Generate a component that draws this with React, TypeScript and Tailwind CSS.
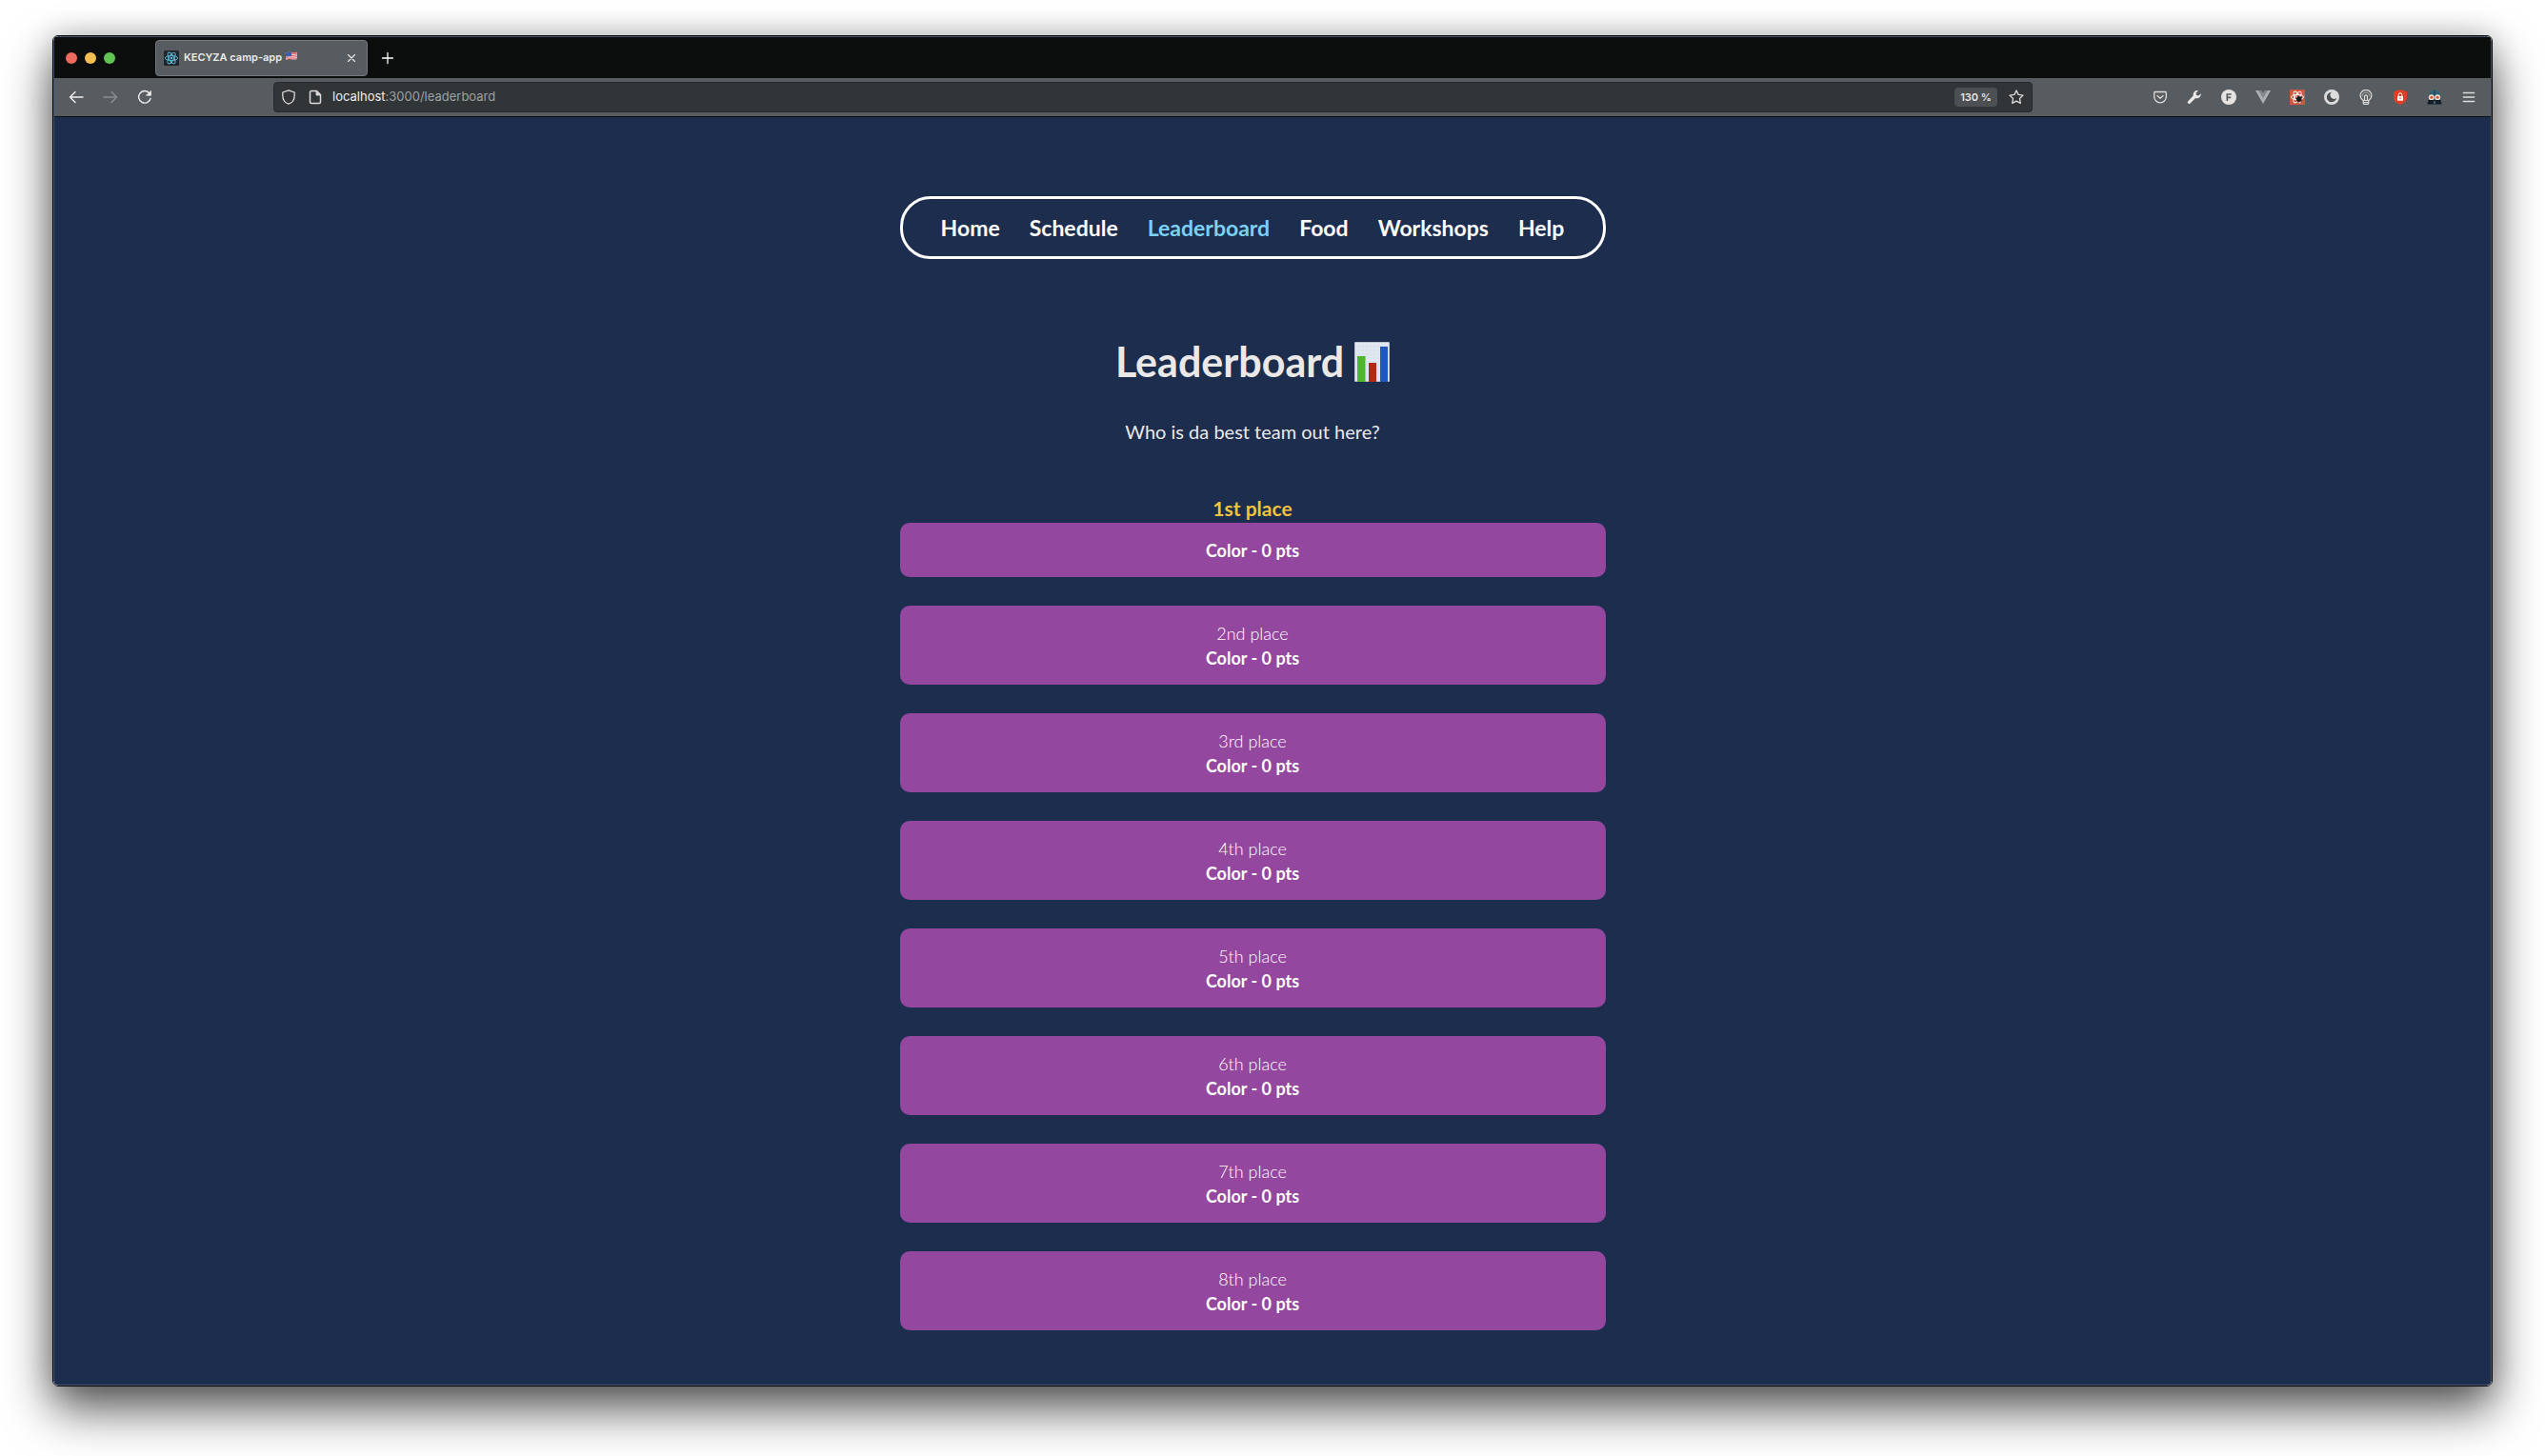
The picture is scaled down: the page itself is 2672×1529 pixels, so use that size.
import React from "react";

const links = ["Home", "Schedule", "Leaderboard", "Food", "Workshops", "Help"];
const places = ["2nd", "3rd", "4th", "5th", "6th", "7th", "8th"];

function Stroke({ children, className = "size-4", width = 1.3 }: { children: React.ReactNode; className?: string; width?: number }) {
  return (
    <svg viewBox="0 0 16 16" className={className} fill="none" stroke="currentColor" strokeWidth={width} strokeLinecap="round" strokeLinejoin="round" aria-hidden="true">
      {children}
    </svg>
  );
}

function Art({ children }: { children: React.ReactNode }) {
  return <svg viewBox="0 0 16 16" className="size-4" aria-hidden="true">{children}</svg>;
}

function ReactMark({ color }: { color: string }) {
  return (
    <g fill="none" stroke={color} strokeWidth="0.9">
      <ellipse cx="8" cy="8" rx="6.6" ry="2.6" />
      <ellipse cx="8" cy="8" rx="6.6" ry="2.6" transform="rotate(60 8 8)" />
      <ellipse cx="8" cy="8" rx="6.6" ry="2.6" transform="rotate(120 8 8)" />
      <circle cx="8" cy="8" r="1.2" fill={color} stroke="none" />
    </g>
  );
}

function Flag() {
  return (
    <svg viewBox="0 0 12 10" className="h-[10px] w-3" aria-hidden="true">
      <path d="M0 1.5Q3 .2 6 1T12 .8V8Q9 9 6 8.300T0 9Z" fill="#f0e6e6" />
      <path d="M0 8.300Q3 7.200 6 7.800T12 7.300M0 6.500Q3 5.500 6 6T12 5.500M6 4.300Q9 4.800 12 3.900M6 2.600Q9 3 12 2.200M6 1.200Q9 1.700 12 1" stroke="#d8525c" strokeWidth=".9" fill="none" />
      <path d="M0 1.500Q3 .2 6 1V5Q3 4.600 0 5.600Z" fill="#3d5fa8" />
    </svg>
  );
}

function TabBar() {
  return (
    <div className="flex h-[43px] items-center bg-[#0c0e0d] pl-3">
      <div className="flex gap-2">
        <button aria-label="Close window" className="size-3 rounded-full bg-[#ee6a5f]" />
        <button aria-label="Minimize window" className="size-3 rounded-full bg-[#f5bf4f]" />
        <button aria-label="Zoom window" className="size-3 rounded-full bg-[#61c554]" />
      </div>
      <div className="ml-[42px] flex h-[38px] w-[223px] items-center rounded border border-[#75777f] bg-[#575c60] px-2 text-[#eceae8]">
        <svg viewBox="0 0 16 16" className="size-4" aria-hidden="true">
          <rect width="16" height="16" rx="1.500" fill="#20242b" />
          <ReactMark color="#5fc3e0" />
        </svg>
        <span className="ml-[5px] text-[11px] font-semibold whitespace-nowrap">KECYZA camp-app</span>
        <span className="mb-[3px] ml-1"><Flag /></span>
        <button aria-label="Close tab" className="ml-auto"><Stroke width={1.1}><path d="M4.500 4.500l7 7M11.500 4.500l-7 7" /></Stroke></button>
      </div>
      <button aria-label="New tab" className="ml-[13px] text-white"><Stroke><path d="M8 2.500v11M2.500 8h11" /></Stroke></button>
    </div>
  );
}

function Extensions() {
  return (
    <div className="flex w-[481px] shrink-0 items-center justify-end gap-5 pr-[15px] text-[#dddcda]">
      <button aria-label="Pocket"><Stroke><path d="M2.700 2.500h10.600a1 1 0 0 1 1 1v4a6.300 6.300 0 0 1-12.600 0v-4a1 1 0 0 1 1-1Z" /><path d="M5 6.500l3 2.800 3-2.800" /></Stroke></button>
      <button aria-label="Developer tools">
        <Art><path d="M14.800 4.200l-2.500 2.300-2.300-.5-.5-2.300L11.900 1.200A4.300 4.300 0 0 0 6.700 6.600L1.300 12.200a1.500 1.500 0 0 0 0 2.200 1.500 1.500 0 0 0 2.200 0L9.100 9A4.300 4.300 0 0 0 14.800 4.200Z" fill="#eceae8" /></Art>
      </button>
      <button aria-label="Fonts">
        <Art><circle cx="8" cy="8" r="8" fill="#e6e4e2" /><path d="M6.300 12V5h4.500M6.300 8.300h4" stroke="#575c60" strokeWidth="1.700" fill="none" /></Art>
      </button>
      <button aria-label="Vue devtools">
        <Art><path d="M0 1h6.200L8 4.200 9.800 1H16L8 15Z" fill="#aeb0b1" /><path d="M3.200 1h3L8 4.200 9.800 1h3L8 9.500Z" fill="#85888a" /></Art>
      </button>
      <button aria-label="React devtools">
        <Art><rect width="16" height="16" fill="#d0573f" /><ReactMark color="#fff" /><ellipse cx="9.500" cy="10" rx="2.500" ry="3" fill="#1b1918" /><path d="M6 9l7 3M6.500 12.500l6-5M9 6v8M12 7v6.500" stroke="#1b1918" strokeWidth=".8" /></Art>
      </button>
      <button aria-label="Dark mode">
        <Art><circle cx="8" cy="8" r="8" fill="#dddcda" /><path d="M8 2.800a5.200 5.200 0 1 0 5.200 6A3.600 3.600 0 1 1 8 2.800Z" fill="#4b5054" /></Art>
      </button>
      <button aria-label="Lighthouse">
        <Stroke width={1.2}><path d="M5.200 11.500A5.900 5.900 0 1 1 10.800 11.500V14.300a1 1 0 0 1-1 1H6.200a1 1 0 0 1-1-1Z" /><path d="M6.500 11.300V7.300a1.500 1.500 0 0 1 3 0v4M5.500 11.500h5M5.500 13.500h5" /><path d="M4 7a4 4 0 0 1 8 0" strokeWidth=".7" /></Stroke>
      </button>
      <button aria-label="Privacy shield">
        <Art><path d="M8 0L15 2.300V7.500C15 11.500 12.500 14.500 8 16 3.500 14.500 1 11.500 1 7.500V2.300Z" fill="#e03c26" /><rect x="5" y="7" width="6" height="4.800" rx=".5" fill="#fff" /><path d="M6.200 7V5.500a1.800 1.800 0 0 1 3.600 0V7" stroke="#fff" fill="none" /><path d="M8 8.500v1.500" stroke="#e03c26" /></Art>
      </button>
      <button aria-label="Incognito helper">
        <Art><path d="M2 8C2 3 4.500.5 8 .5S14 3 14 8l1.500 7.500H.5Z" fill="#2f6377" /><path d="M1.500 11h13l1 4.500H.5Z" fill="#171c24" /><path d="M8 .5v6" stroke="#1d3e4d" /><circle cx="4.800" cy="8.200" r="2.900" fill="#f2e3d6" /><circle cx="11.200" cy="8.200" r="2.900" fill="#f2e3d6" /><circle cx="4.800" cy="8.200" r="1.500" fill="#e0502f" /><circle cx="11.200" cy="8.200" r="1.500" fill="#e0502f" /><path d="M8 11.500l-1.500 3h3Z" fill="#46788c" /></Art>
      </button>
      <button aria-label="Menu"><Stroke><path d="M2.300 3.500h11.400M2.300 8h11.400M2.300 12.500h11.400" /></Stroke></button>
    </div>
  );
}

function Toolbar() {
  return (
    <div className="flex h-[41px] items-center border-b border-[#0c0e0d] bg-[#575c60]">
      <div className="flex w-[230px] shrink-0 gap-5 pl-[15px] text-[#f0eeec]">
        <button aria-label="Back"><Stroke width={1.4}><path d="M15 8H1.500M7 2.500L1.500 8 7 13.500" /></Stroke></button>
        <button aria-label="Forward" className="text-[#8b8f92]" disabled><Stroke width={1.4}><path d="M1 8h13.500M9 2.500L14.500 8 9 13.500" /></Stroke></button>
        <button aria-label="Reload"><Stroke width={1.4}><path d="M14 9.500A6.300 6.300 0 1 1 12.500 3.500" /><path d="M14.500 1.500V6.300H9.700Z" fill="currentColor" strokeWidth=".6" /></Stroke></button>
      </div>
      <div className="flex h-8 flex-1 items-center rounded border border-[#272a2c] bg-[#313537] pr-2 pl-[7px] text-[#dddcda]">
        <Stroke><path d="M8 .8L14.200 3V6C14.200 10.500 12 14 8 15.200 4 14 1.800 10.500 1.800 6V3Z" /></Stroke>
        <span className="ml-3"><Stroke width={1.500}><path d="M9.500 1.500H4A1.500 1.500 0 0 0 2.500 3v10A1.500 1.500 0 0 0 4 14.500h8a1.500 1.500 0 0 0 1.500-1.500V5.500Z" /><path d="M9 1.500v4.500h4.500Z" fill="currentColor" strokeWidth=".8" /></Stroke></span>
        <a href="#leaderboard" className="ml-[10px] flex-1 text-[13px] text-[#9fa1a2]"><span className="text-[#f0eeec]">localhost</span>:3000/leaderboard</a>
        <button className="h-5 w-[45px] rounded-sm bg-[#4c5053] text-[11px] font-semibold text-[#e6e4e2]">130 %</button>
        <button aria-label="Bookmark" className="ml-3"><Stroke><path d="M8 1l2.100 4.400 4.900.7-3.500 3.400.8 4.900L8 12.100 3.700 14.400l.8-4.900L1 6.100l4.900-.7Z" /></Stroke></button>
      </div>
      <Extensions />
    </div>
  );
}

function ChartIcon() {
  return (
    <svg viewBox="0 0 37 42" className="h-[42px] w-[37px]" aria-label="bar chart" role="img">
      <rect width="37" height="42" rx="1" fill="#b9c0cb" />
      <rect x="1" y="1" width="35" height="40" fill="#e2e9f3" />
      <path d="M1 5h35M1 9h35M1 13h35M1 17h35M1 21h35M1 25h35M1 29h35M1 33h35M1 37h35M5 1v40M9 1v40M13 1v40M17 1v40M21 1v40M25 1v40M29 1v40M33 1v40" stroke="#d3dbe7" strokeWidth=".6" />
      <rect x="3" y="15" width="8.500" height="27" fill="#50b432" />
      <rect x="15" y="22" width="8" height="20" fill="#b02a14" />
      <rect x="27" y="5" width="8" height="37" fill="#2158bd" />
    </svg>
  );
}

export default function App() {
  return (
    <div className="bg-white px-[55px] pt-[37px] pb-[73px] font-['Inter',sans-serif]">
      <div className="overflow-hidden rounded-md border border-black shadow-[0_24px_50px_rgba(0,0,0,0.65),0_0_30px_rgba(0,0,0,0.2)]">
        <div className="rounded-[5px] border border-white/20 bg-[#1d2d4d]">
          <TabBar />
          <Toolbar />
          <div className="pt-[83px] pr-[42px] pb-[57px] font-['Lato',sans-serif] text-[#ebe9e7]">
            <div className="mx-auto max-w-[741px] text-center">
              <nav className="flex h-[66px] items-center justify-center gap-[31px] rounded-[32px] border-[3px] border-white text-[23px] font-bold text-white">
                {links.map((link) => (
                  <a key={link} href={"#" + link.toLowerCase()} className={link === "Leaderboard" ? "text-[#7bd0f5]" : ""}>{link}</a>
                ))}
              </nav>
              <h1 className="mt-[78px] flex h-[60px] items-center justify-center gap-[11px] text-[43px] font-bold">
                Leaderboard <ChartIcon />
              </h1>
              <p className="mt-7 text-[20px] leading-[30px]">Who is da best team out here?</p>
              <h2 className="mt-[51px] text-[21px] leading-[30px] font-bold text-[#f2c23e]">1st place</h2>
              <div className="rounded-[10px] bg-[#94479e] pt-4 pb-[15px] text-[18px] leading-[26px] font-bold text-white">Color - 0 pts</div>
              {places.map((place) => (
                <div key={place} className="mt-[30px] rounded-[10px] bg-[#94479e] pt-4 pb-[15px] text-[18px] leading-[26px] text-white">
                  <p className="font-light">{place} place</p>
                  <p className="font-bold">Color - 0 pts</p>
                </div>
              ))}
            </div>
          </div>
        </div>
      </div>
    </div>
  );
}
